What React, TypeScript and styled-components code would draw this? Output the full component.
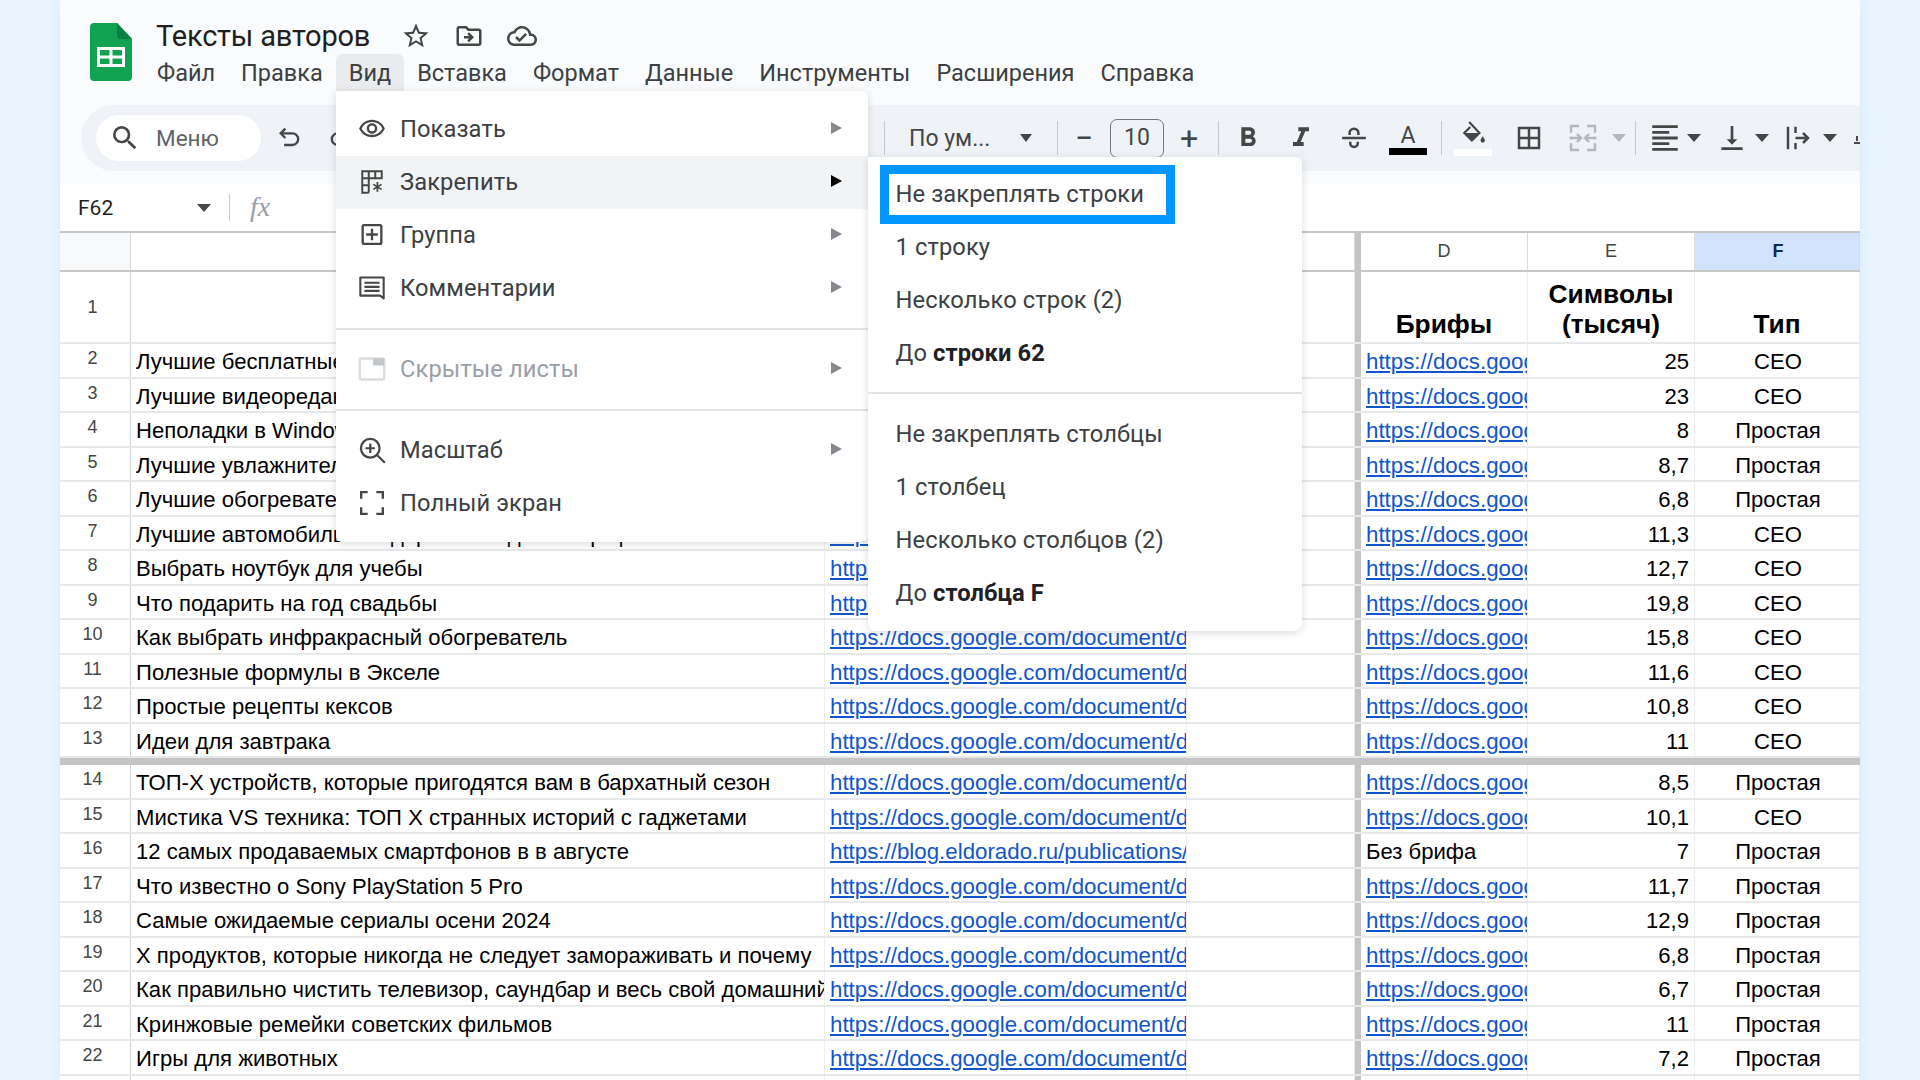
import React from 'react';
import styled, { createGlobalStyle } from 'styled-components';
import {
  MdFormatAlignLeft,
  MdFormatBold,
  MdFormatItalic,
  MdOutlineAddBox,
  MdOutlineCloudDone,
  MdOutlineDriveFileMove,
  MdOutlineStarBorder,
  MdOutlineVisibility,
  MdSearch,
  MdBorderAll,
  MdVerticalAlignBottom,
} from 'react-icons/md';

const GlobalStyle = createGlobalStyle`
  html, body {
    margin: 0;
    padding: 0;
    background: #e8f4fe;
    overflow: hidden;
  }
`;

const Page = styled.div`
  display: flex;
  justify-content: center;
  height: 1080px;
  overflow: hidden;
  font-family: Roboto, 'Noto Sans', sans-serif;
`;

const Sheet = styled.div`
  position: relative;
  width: 1800px;
  height: 1080px;
  overflow: hidden;
  background: #f9fbfd;
  box-shadow: 0 0 12px rgba(60, 90, 130, 0.06);
`;

const Header = styled.header`
  display: flex;
  height: 105px;
  padding: 23px 0 0 30px;
  box-sizing: border-box;
`;

const TitleBlock = styled.div`
  margin-left: 24px;
  margin-top: -7px;
`;

const TitleRow = styled.div`
  display: flex;
  align-items: center;
  height: 40px;
`;

const Title = styled.div`
  font-size: 29px;
  color: #1f1f1f;
  width: 214px;
  white-space: nowrap;
  letter-spacing: -0.2px;
`;

const TitleIcons = styled.div`
  display: flex;
  gap: 23px;
  margin-left: 31px;
  color: #444746;
`;

const MenuBar = styled.nav`
  display: flex;
  margin-left: -12px;
  margin-top: -2px;
`;

const MenuItem = styled.div<{ $open?: boolean }>`
  padding: 0 13px;
  height: 37px;
  line-height: 39px;
  font-size: 23.5px;
  color: #3c4043;
  border-radius: 6px 6px 0 0;
  background: ${(p) => (p.$open ? '#e9ebee' : 'transparent')};
`;

const Toolbar = styled.div`
  display: flex;
  align-items: center;
  height: 66px;
  margin-left: 21px;
  padding-left: 15px;
  background: #eff3f8;
  border-radius: 33px 0 0 33px;
`;

const SearchPill = styled.div`
  display: flex;
  align-items: center;
  width: 165px;
  height: 46px;
  box-sizing: border-box;
  padding-left: 13px;
  background: #fff;
  border-radius: 23px;
  color: #5f6368;
  font-size: 22.5px;
  flex: none;

  svg {
    margin-right: 15px;
    color: #444746;
  }
`;

const Slot = styled.div<{ $w: number; $ml?: number; $muted?: boolean }>`
  display: flex;
  flex: none;
  flex-direction: column;
  align-items: center;
  justify-content: center;
  width: ${(p) => p.$w}px;
  margin-left: ${(p) => p.$ml ?? 0}px;
  color: ${(p) => (p.$muted ? '#b4b8bd' : '#444746')};
`;

const Divider = styled.div<{ $ml?: number }>`
  flex: none;
  width: 1px;
  height: 34px;
  margin-left: ${(p) => p.$ml ?? 0}px;
  background: #c7c9cc;
`;

const FontSelect = styled.div`
  display: flex;
  flex: none;
  align-items: center;
  justify-content: space-between;
  width: 123px;
  margin-left: 24px;
  padding-right: 8px;
  font-size: 23px;
  color: #444746;
`;

const Caret = styled.span<{ $muted?: boolean; $small?: boolean }>`
  display: block;
  width: 0;
  height: 0;
  border-left: ${(p) => (p.$small ? 7 : 6)}px solid transparent;
  border-right: ${(p) => (p.$small ? 7 : 6)}px solid transparent;
  border-top: 8px solid ${(p) => (p.$muted ? '#b4b8bd' : '#444746')};
`;

const SizeBox = styled.div`
  flex: none;
  width: 54px;
  height: 39px;
  box-sizing: border-box;
  border: 1.5px solid #747775;
  border-radius: 7px;
  text-align: center;
  line-height: 36px;
  font-size: 23px;
  color: #444746;
`;

const PlusMinus = styled.span`
  font-size: 32px;
  line-height: 30px;
  color: #444746;
`;

const ColorLetter = styled.span`
  margin-top: 3px;
  font-size: 23px;
  line-height: 24px;
  color: #444746;
`;

const ColorBar = styled.span<{ $color: string; $w: number; $mt?: number }>`
  display: block;
  width: ${(p) => p.$w}px;
  height: 7px;
  margin-top: ${(p) => p.$mt ?? 0}px;
  background: ${(p) => p.$color};
`;

const Band = styled.div`
  height: 13px;
`;

const FormulaBar = styled.div`
  display: flex;
  align-items: center;
  height: 47px;
  background: #fff;
  padding-left: 18px;
`;

const NameBox = styled.div`
  display: flex;
  align-items: center;
  justify-content: space-between;
  width: 133px;
  font-size: 21px;
  color: #1f1f1f;
`;

const FormulaDivider = styled.div`
  width: 1px;
  height: 27px;
  margin-left: 18px;
  background: #c7c9cc;
`;

const Fx = styled.span`
  margin: -2px 0 0 20px;
  font-family: 'Liberation Serif', serif;
  font-style: italic;
  font-size: 28px;
  color: #9a9da1;
`;

const Grid = styled.div`
  background: #fff;
  font-family: 'Liberation Sans', Arial, sans-serif;
  font-size: 22.1px;
  color: #000;
`;

const columns = '71px 694px 362px 168px 6px 167px 167px 165px';

const HeaderRow = styled.div`
  display: grid;
  grid-template-columns: ${columns};
  height: 41px;
  box-sizing: border-box;
  border-top: 2px solid #c7c7c7;
  border-bottom: 2px solid #c7c7c7;
`;

const HeaderCell = styled.div<{ $selected?: boolean; $corner?: boolean }>`
  display: flex;
  align-items: center;
  justify-content: center;
  box-sizing: border-box;
  padding-left: ${(p) => (p.$selected ? 2 : 0)}px;
  border-right: 1px solid #d9dbdd;
  font-size: 18px;
  font-weight: ${(p) => (p.$selected ? 700 : 400)};
  color: ${(p) => (p.$selected ? '#0b2a5b' : '#444746')};
  background: ${(p) => (p.$selected ? '#d3e3fd' : p.$corner ? '#f8f9fa' : '#fff')};
`;

const Row = styled.div<{ $h: number }>`
  display: grid;
  grid-template-columns: ${columns};
  height: ${(p) => p.$h}px;
  box-sizing: border-box;
  border-bottom: 2px solid #e6e8ea;
`;

const RowNumber = styled.div<{ $tall?: boolean }>`
  display: flex;
  align-items: center;
  justify-content: center;
  padding: 0 5px ${(p) => (p.$tall ? 0 : 3)}px 0;
  box-sizing: border-box;
  border-right: 1px solid #d0d2d4;
  font-size: 18px;
  color: #444746;
`;

const Cell = styled.div<{ $align?: 'left' | 'right' | 'center' }>`
  overflow: hidden;
  white-space: nowrap;
  box-sizing: border-box;
  padding: 0 5px 0 ${(p) => (p.$align === 'center' ? 7 : 5)}px;
  line-height: 36px;
  border-right: 1px solid #eceef0;
  text-align: ${(p) => p.$align ?? 'left'};
`;

const BoldCell = styled.div`
  display: flex;
  align-items: flex-end;
  justify-content: center;
  box-sizing: border-box;
  padding-bottom: 3px;
  text-align: center;
  line-height: 30px;
  font-size: 26.3px;
  font-weight: 700;
  border-right: 1px solid #eceef0;
`;

const FrozenColumn = styled.div`
  background: #c4c4c4;
`;

const FrozenRow = styled.div`
  height: 7px;
  background: #c4c4c4;
`;

const LinkText = styled.span`
  font-size: 22.3px;
  color: #1155cc;
  text-decoration: underline;
`;

const ViewMenu = styled.div`
  position: absolute;
  left: 276px;
  top: 91px;
  width: 532px;
  height: 451px;
  box-sizing: border-box;
  padding-top: 12px;
  background: #fff;
  border-radius: 0 6px 6px 6px;
  box-shadow: 0 2px 8px rgba(60, 64, 67, 0.18);
`;

const SubMenu = styled.div`
  position: absolute;
  left: 808px;
  top: 157px;
  width: 434px;
  height: 474px;
  box-sizing: border-box;
  padding-top: 10px;
  background: #fff;
  border-radius: 0 6px 8px 8px;
  box-shadow: 0 2px 8px rgba(60, 64, 67, 0.18);
`;

const ViewItem = styled.div<{ $active?: boolean; $disabled?: boolean }>`
  display: flex;
  align-items: center;
  height: 53px;
  padding: 0 26px 2px 22px;
  box-sizing: border-box;
  font-size: 23.7px;
  letter-spacing: 0.1px;
  color: ${(p) => (p.$disabled ? '#9aa0a6' : '#3c4043')};
  background: ${(p) => (p.$active ? '#f1f3f4' : 'transparent')};
`;

const ItemIcon = styled.span<{ $disabled?: boolean }>`
  display: flex;
  align-items: center;
  justify-content: center;
  width: 28px;
  height: 28px;
  margin-right: 14px;
  color: ${(p) => (p.$disabled ? '#c4c7ca' : '#444746')};
`;

const ItemArrow = styled.span<{ $active?: boolean }>`
  width: 0;
  height: 0;
  margin: 0 0 2px auto;
  border-top: 6px solid transparent;
  border-bottom: 6px solid transparent;
  border-left: 11px solid ${(p) => (p.$active ? '#000' : '#85898d')};
`;

const MenuRule = styled.div`
  height: 2px;
  margin: 13px 0;
  background: #e1e3e5;
`;

const SubItem = styled.div<{ $marked?: boolean }>`
  position: relative;
  display: flex;
  align-items: center;
  height: 53px;
  padding: 1px 0 0 27.5px;
  box-sizing: border-box;
  font-size: 23.7px;
  letter-spacing: 0.1px;
  color: #3c4043;

  b {
    margin-left: 6px;
    font-weight: 700;
    color: #202124;
  }

  ${(p) =>
    p.$marked &&
    `&::after {
      content: '';
      position: absolute;
      left: 12px;
      top: -2px;
      width: 295px;
      height: 59px;
      box-sizing: border-box;
      border: 9px solid #0095ff;
    }`}
`;

const SheetsLogo = () => (
  <svg width="42" height="58" viewBox="0 0 42 58">
    <path d="M4 0H27L42 16V54a4 4 0 0 1-4 4H4a4 4 0 0 1-4-4V4a4 4 0 0 1 4-4z" fill="#12a350" />
    <path d="M27 0L42 16H31a4 4 0 0 1-4-4z" fill="#0c8043" />
    <path d="M7 24H35V44H7z" fill="#fff" />
    <path d="M10 27H19.5V32.5H10zM22.5 27H32V32.5H22.5zM10 35.5H19.5V41H10zM22.5 35.5H32V41H22.5z" fill="#12a350" />
  </svg>
);

const UndoIcon = () => (
  <svg width="28" height="28" viewBox="0 0 24 24" fill="none" stroke="#444746" strokeWidth="2">
    <path d="M8 4L4 8l4 4M4 8h10a5 5 0 0 1 0 10H7" />
  </svg>
);

const RedoIcon = () => (
  <svg width="28" height="28" viewBox="0 0 24 24" fill="none" stroke="#444746" strokeWidth="2">
    <path d="M16 4l4 4-4 4M20 8H10a5 5 0 0 0 0 10h7" />
  </svg>
);

const StrikeIcon = () => (
  <svg width="30" height="30" viewBox="0 0 24 24" fill="none" stroke="#444746" strokeWidth="2">
    <path d="M2.5 12h19M8.5 9.5V8a3.5 3.5 0 0 1 7 0v1.5M9 15v1.2a3 3 0 0 0 6 0V15" />
  </svg>
);

const PaintIcon = () => (
  <svg width="27" height="26" viewBox="0 0 24 24" fill="#444746">
    <path d="M8 1l9.5 10-7 7-7-7 5.5-5.5" fill="none" stroke="#444746" strokeWidth="2" />
    <path d="M3.5 11h14l-7 7z" />
    <path d="M20.5 14c-1 1.7-2 2.7-2 4a2 2 0 0 0 4 0c0-1.3-1-2.3-2-4z" />
  </svg>
);

const FreezeIcon = () => (
  <svg width="26" height="26" viewBox="0 0 24 24" fill="none" stroke="currentColor" strokeWidth="1.8">
    <path d="M3 2h18v6.5H3zM9 2v20M15 2v6.5M3 8.5v13.5h6M3 15h6" />
    <path d="M17 12v9M13.2 14.2l7.6 4.6M20.8 14.2l-7.6 4.6" strokeWidth="1.6" />
  </svg>
);

const CommentIcon = () => (
  <svg width="30" height="30" viewBox="0 0 24 24" fill="none" stroke="currentColor" strokeWidth="1.8">
    <path d="M2 3h20v18l-3-2.5H2z" strokeLinejoin="round" />
    <path d="M5.5 7.5h13M5.5 11h13M5.5 14.5h13" />
  </svg>
);

const HiddenSheetsIcon = () => (
  <svg width="30" height="28" viewBox="0 0 24 22">
    <rect x="1.5" y="2" width="21" height="18" rx="1.5" fill="none" stroke="#dadcde" strokeWidth="2" />
    <path d="M13 2h9.5v6H13z" fill="#c4c7ca" />
  </svg>
);

const ZoomIcon = () => (
  <svg width="30" height="30" viewBox="0 0 24 24" fill="none" stroke="currentColor" strokeWidth="1.9">
    <circle cx="10.5" cy="10.5" r="8" />
    <path d="M10.5 6.5v8M6.5 10.5h8M16.3 16.3L23 23" />
  </svg>
);

const FullscreenIcon = () => (
  <svg width="26" height="26" viewBox="0 0 24 24" fill="none" stroke="currentColor" strokeWidth="2.2">
    <path d="M2 8V2h6M16 2h6v6M2 16v6h6M22 16v6h-6" />
  </svg>
);

const MergeIcon = () => (
  <svg width="32" height="32" viewBox="0 0 24 24" fill="none" stroke="#b4b8bd" strokeWidth="1.8">
    <path d="M9 3H3v5M3 11v2M3 16v5h6M15 3h6v5M21 11v2M21 16v5h-6" />
    <path d="M2 12h8M7.5 9l3 3-3 3M22 12h-8M16.5 9l-3 3 3 3" />
  </svg>
);

const WrapIcon = () => (
  <svg width="30" height="30" viewBox="0 0 24 24" fill="none" stroke="#444746" strokeWidth="2">
    <path d="M4 3v18M10 3v5M10 16v5M10 12h10M16 8l4 4-4 4" />
  </svg>
);

const TextRotateIcon = () => (
  <svg width="12" height="12" viewBox="0 0 12 12" fill="#444746">
    <path d="M0 10h6v2H0zM2 4h2v5H2z" />
  </svg>
);

interface SheetRow {
  n: number;
  title: string;
  link?: string;
  brief?: string;
  size: string;
  kind: string;
}

const DOC = 'https://docs.google.com/document/d/1a2b3c4d5e6f';

const rows: SheetRow[] = [
  { n: 2, title: 'Лучшие бесплатные приложения', size: '25', kind: 'СЕО' },
  { n: 3, title: 'Лучшие видеоредакторы', size: '23', kind: 'СЕО' },
  { n: 4, title: 'Неполадки в Windows 11', size: '8', kind: 'Простая' },
  { n: 5, title: 'Лучшие увлажнители воздуха', size: '8,7', kind: 'Простая' },
  { n: 6, title: 'Лучшие обогреватели для дома', size: '6,8', kind: 'Простая' },
  { n: 7, title: 'Лучшие автомобильные держатели для смартфона', size: '11,3', kind: 'СЕО' },
  { n: 8, title: 'Выбрать ноутбук для учебы', size: '12,7', kind: 'СЕО' },
  { n: 9, title: 'Что подарить на год свадьбы', size: '19,8', kind: 'СЕО' },
  { n: 10, title: 'Как выбрать инфракрасный обогреватель', size: '15,8', kind: 'СЕО' },
  { n: 11, title: 'Полезные формулы в Экселе', size: '11,6', kind: 'СЕО' },
  { n: 12, title: 'Простые рецепты кексов', size: '10,8', kind: 'СЕО' },
  { n: 13, title: 'Идеи для завтрака', size: '11', kind: 'СЕО' },
  { n: 14, title: 'ТОП-Х устройств, которые пригодятся вам в бархатный сезон', size: '8,5', kind: 'Простая' },
  { n: 15, title: 'Мистика VS техника: ТОП Х странных историй с гаджетами', size: '10,1', kind: 'СЕО' },
  {
    n: 16,
    title: '12 самых продаваемых смартфонов в в августе',
    link: 'https://blog.eldorado.ru/publications/',
    brief: 'Без брифа',
    size: '7',
    kind: 'Простая',
  },
  { n: 17, title: 'Что известно о Sony PlayStation 5 Pro', size: '11,7', kind: 'Простая' },
  { n: 18, title: 'Самые ожидаемые сериалы осени 2024', size: '12,9', kind: 'Простая' },
  { n: 19, title: 'Х продуктов, которые никогда не следует замораживать и почему', size: '6,8', kind: 'Простая' },
  { n: 20, title: 'Как правильно чистить телевизор, саундбар и весь свой домашний кинотеатр', size: '6,7', kind: 'Простая' },
  { n: 21, title: 'Кринжовые ремейки советских фильмов', size: '11', kind: 'Простая' },
  { n: 22, title: 'Игры для животных', size: '7,2', kind: 'Простая' },
];

const menuNames = ['Файл', 'Правка', 'Вид', 'Вставка', 'Формат', 'Данные', 'Инструменты', 'Расширения', 'Справка'];

const App: React.FC = () => {
  return (
    <Page>
      <GlobalStyle />
      <Sheet>
        <Header>
          <SheetsLogo />
          <TitleBlock>
            <TitleRow>
              <Title>Тексты авторов</Title>
              <TitleIcons>
                <MdOutlineStarBorder size={30} />
                <MdOutlineDriveFileMove size={30} />
                <MdOutlineCloudDone size={30} />
              </TitleIcons>
            </TitleRow>
            <MenuBar>
              {menuNames.map((name) => (
                <MenuItem key={name} $open={name === 'Вид'}>
                  {name}
                </MenuItem>
              ))}
            </MenuBar>
          </TitleBlock>
        </Header>

        <Toolbar>
          <SearchPill>
            <MdSearch size={32} />
            Меню
          </SearchPill>
          <Slot $w={38} $ml={10}>
            <UndoIcon />
          </Slot>
          <Slot $w={38} $ml={12}>
            <RedoIcon />
          </Slot>
          <Divider $ml={525} />
          <FontSelect>
            По ум...
            <Caret />
          </FontSelect>
          <Divider $ml={17} />
          <Slot $w={52}>
            <PlusMinus>−</PlusMinus>
          </Slot>
          <SizeBox>10</SizeBox>
          <Slot $w={50}>
            <PlusMinus>+</PlusMinus>
          </Slot>
          <Divider $ml={4} />
          <Slot $w={58}>
            <MdFormatBold size={32} />
          </Slot>
          <Slot $w={48}>
            <MdFormatItalic size={32} />
          </Slot>
          <Slot $w={58}>
            <StrikeIcon />
          </Slot>
          <Slot $w={50}>
            <ColorLetter>A</ColorLetter>
            <ColorBar $color="#000" $w={38} />
          </Slot>
          <Divider $ml={8} />
          <Slot $w={62}>
            <PaintIcon />
            <ColorBar $color="#fff" $w={38} $mt={2} />
          </Slot>
          <Slot $w={50}>
            <MdBorderAll size={30} />
          </Slot>
          <Slot $w={58}>
            <MergeIcon />
          </Slot>
          <Slot $w={14}>
            <Caret $muted $small />
          </Slot>
          <Divider $ml={9} />
          <Slot $w={38} $ml={10}>
            <MdFormatAlignLeft size={34} />
          </Slot>
          <Slot $w={14} $ml={3}>
            <Caret $small />
          </Slot>
          <Slot $w={38} $ml={12}>
            <MdVerticalAlignBottom size={32} />
          </Slot>
          <Slot $w={14} $ml={4}>
            <Caret $small />
          </Slot>
          <Slot $w={38} $ml={10}>
            <WrapIcon />
          </Slot>
          <Slot $w={14} $ml={6}>
            <Caret $small />
          </Slot>
          <Slot $w={12} $ml={17}>
            <TextRotateIcon />
          </Slot>
        </Toolbar>

        <Band />

        <FormulaBar>
          <NameBox>
            F62
            <Caret $small />
          </NameBox>
          <FormulaDivider />
          <Fx>fx</Fx>
        </FormulaBar>

        <Grid>
          <HeaderRow>
            <HeaderCell $corner />
            <HeaderCell>A</HeaderCell>
            <HeaderCell>B</HeaderCell>
            <HeaderCell>C</HeaderCell>
            <FrozenColumn />
            <HeaderCell>D</HeaderCell>
            <HeaderCell>E</HeaderCell>
            <HeaderCell $selected>F</HeaderCell>
          </HeaderRow>

          <Row $h={72}>
            <RowNumber $tall>1</RowNumber>
            <BoldCell />
            <BoldCell />
            <BoldCell />
            <FrozenColumn />
            <BoldCell>Брифы</BoldCell>
            <BoldCell>
              Символы
              <br />
              (тысяч)
            </BoldCell>
            <BoldCell>Тип</BoldCell>
          </Row>

          {rows.map((row) => (
            <React.Fragment key={row.n}>
              <Row $h={34.5}>
                <RowNumber>{row.n}</RowNumber>
                <Cell>{row.title}</Cell>
                <Cell>
                  <LinkText>{row.link ?? DOC}</LinkText>
                </Cell>
                <Cell />
                <FrozenColumn />
                <Cell>{row.brief ?? <LinkText>{DOC}</LinkText>}</Cell>
                <Cell $align="right">{row.size}</Cell>
                <Cell $align="center">{row.kind}</Cell>
              </Row>
              {row.n === 13 && <FrozenRow />}
            </React.Fragment>
          ))}

          <Row $h={34.5}>
            <RowNumber />
            <Cell />
            <Cell />
            <Cell />
            <FrozenColumn />
            <Cell />
            <Cell />
            <Cell />
          </Row>
        </Grid>

        <ViewMenu>
          <ViewItem>
            <ItemIcon>
              <MdOutlineVisibility size={30} />
            </ItemIcon>
            Показать
            <ItemArrow />
          </ViewItem>
          <ViewItem $active>
            <ItemIcon>
              <FreezeIcon />
            </ItemIcon>
            Закрепить
            <ItemArrow $active />
          </ViewItem>
          <ViewItem>
            <ItemIcon>
              <MdOutlineAddBox size={29} />
            </ItemIcon>
            Группа
            <ItemArrow />
          </ViewItem>
          <ViewItem>
            <ItemIcon>
              <CommentIcon />
            </ItemIcon>
            Комментарии
            <ItemArrow />
          </ViewItem>
          <MenuRule />
          <ViewItem $disabled>
            <ItemIcon $disabled>
              <HiddenSheetsIcon />
            </ItemIcon>
            Скрытые листы
            <ItemArrow />
          </ViewItem>
          <MenuRule />
          <ViewItem>
            <ItemIcon>
              <ZoomIcon />
            </ItemIcon>
            Масштаб
            <ItemArrow />
          </ViewItem>
          <ViewItem>
            <ItemIcon>
              <FullscreenIcon />
            </ItemIcon>
            Полный экран
          </ViewItem>
        </ViewMenu>

        <SubMenu>
          <SubItem $marked>Не закреплять строки</SubItem>
          <SubItem>1 строку</SubItem>
          <SubItem>Несколько строк (2)</SubItem>
          <SubItem>
            До<b>строки 62</b>
          </SubItem>
          <MenuRule />
          <SubItem>Не закреплять столбцы</SubItem>
          <SubItem>1 столбец</SubItem>
          <SubItem>Несколько столбцов (2)</SubItem>
          <SubItem>
            До<b>столбца F</b>
          </SubItem>
        </SubMenu>
      </Sheet>
    </Page>
  );
};

export default App;
